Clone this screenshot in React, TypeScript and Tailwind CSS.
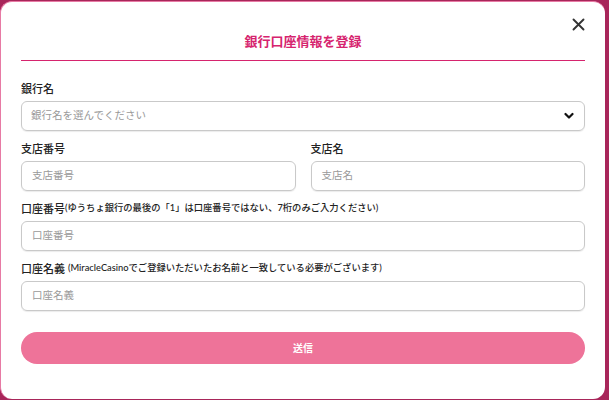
import React from "react";

const font = { fontFamily: '"Lato", "Noto Sans CJK JP", sans-serif' };

function Field({ label, note, placeholder, gap }: { label: string; note?: string; placeholder: string; gap?: boolean }) {
  return (
    <div className="flex flex-col gap-[6px]">
      <div className="h-[14px] flex items-center text-[11px] font-medium text-[#222] leading-none">
        <span>{label}</span>
        {note && <span className={gap ? "ml-[3px] text-[9.3px] font-medium" : "text-[9.3px] font-medium"}>{note}</span>}
      </div>
      <div className="h-[30px] rounded-[6px] border border-[#c9c9c9] flex items-center px-[10px] text-[10.5px] text-[#999] shadow-[0_1px_1px_rgba(0,0,0,0.08)]">
        {placeholder}
      </div>
    </div>
  );
}

export default function App() {
  return (
    <div className="w-[609px] h-[400px] bg-[#a8265a] overflow-hidden" style={font}>
      <div className="w-[605px] h-[398px] mt-[1px] bg-white rounded-[12px] border-l border-t border-[#e77aa4] relative px-5">
        <button className="absolute left-[571px] top-[16px] text-[#333]">
          <svg width="13" height="13" viewBox="0 0 13 13" fill="none" stroke="currentColor" strokeWidth="1.9" strokeLinecap="round">
            <path d="M1.5 1.5L11.5 11.5M11.5 1.5L1.5 11.5" />
          </svg>
        </button>
        <div className="pt-[30px] pb-[10px] border-b-[1.5px] border-[#d6246e] text-center text-[13px] font-bold text-[#d6246e] leading-[18px]">
          銀行口座情報を登録
        </div>
        <div className="mt-[20px] flex flex-col gap-[10px]">
          <div className="flex flex-col gap-[6px]">
            <div className="h-[14px] flex items-center text-[11px] font-medium text-[#222] leading-none">銀行名</div>
            <div className="h-[30px] rounded-[6px] border border-[#c9c9c9] flex items-center justify-between pl-[9px] pr-[10px] text-[10.5px] text-[#999] shadow-[0_1px_1px_rgba(0,0,0,0.08)]">
              <span>銀行名を選んでください</span>
              <svg width="10" height="8" viewBox="0 0 10 8" fill="none" stroke="#111" strokeWidth="2.2" strokeLinecap="round" strokeLinejoin="round">
                <path d="M1.5 2L5 5.5L8.5 2" />
              </svg>
            </div>
          </div>
          <div className="grid grid-cols-2 gap-[15px]">
            <Field label="支店番号" placeholder="支店番号" />
            <Field label="支店名" placeholder="支店名" />
          </div>
          <Field label="口座番号" note="(ゆうちょ銀行の最後の「1」は口座番号ではない、7桁のみご入力ください)" placeholder="口座番号" />
          <Field label="口座名義" gap note="(MiracleCasinoでご登録いただいたお名前と一致している必要がございます)" placeholder="口座名義" />
        </div>
        <button className="mt-[21px] w-full h-[32px] rounded-full bg-[#ee7399] text-white text-[10px] font-bold">送信</button>
      </div>
    </div>
  );
}
